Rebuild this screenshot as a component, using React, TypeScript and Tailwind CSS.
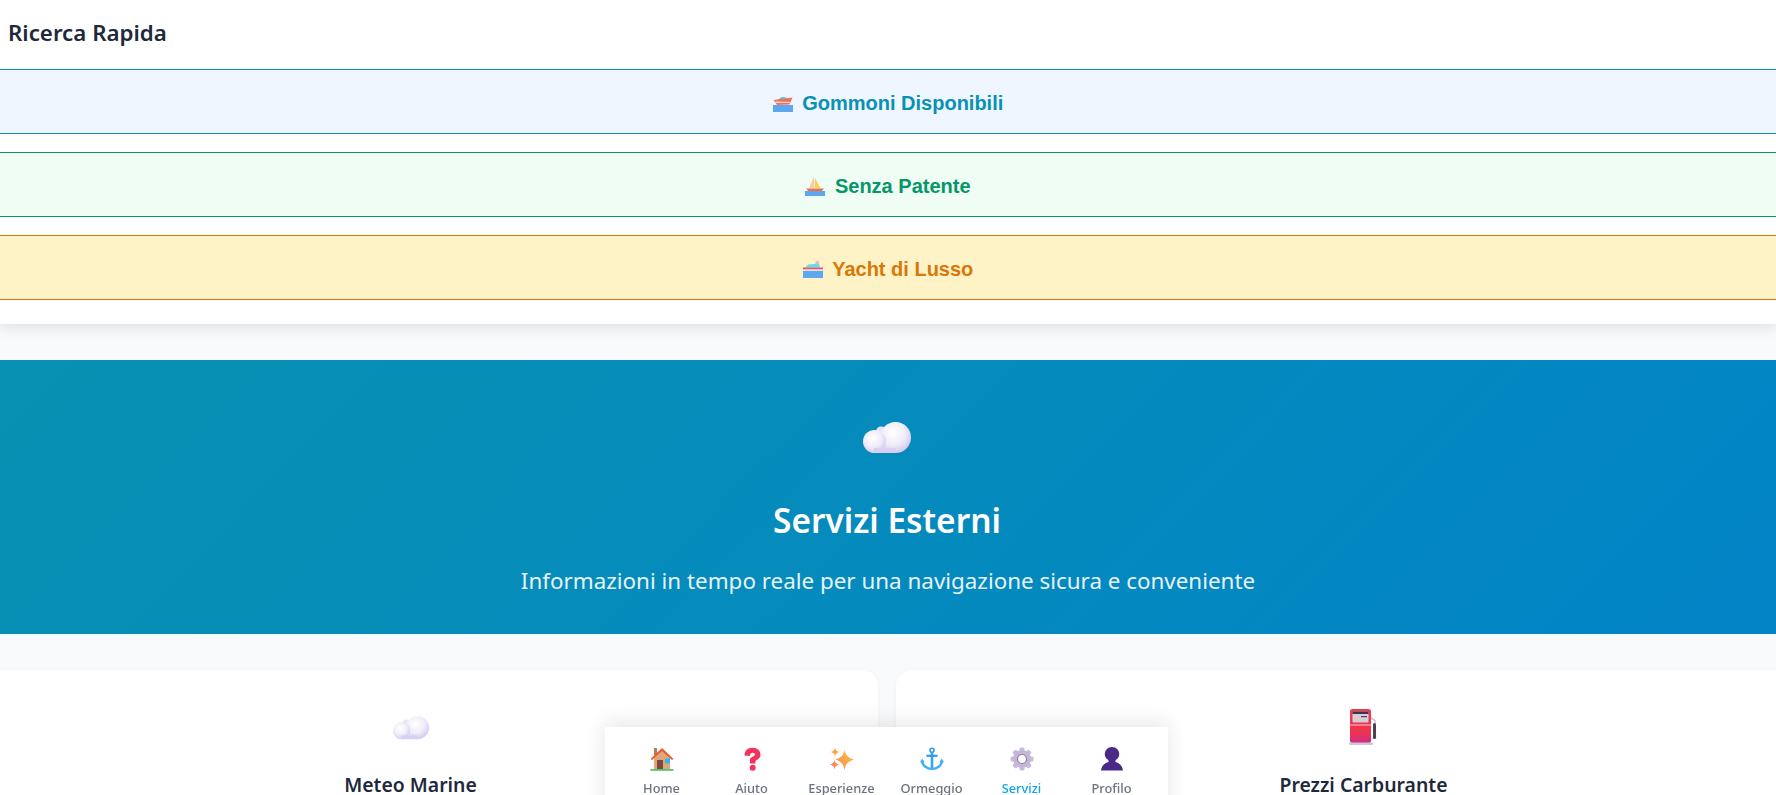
import React from 'react';

const sans = "font-['Noto_Sans',sans-serif]";

function Speedboat() {
  return (
    <svg viewBox="0 0 20 18" className="h-[18px] w-5">
      <path d="M5 5.5 L9 3 L13 3.5 L15 6.5 L6 6.5 Z" fill="#4fc3dc" />
      <path d="M0.5 6 L19.5 3.5 L16.5 10.5 L4 11 Z" fill="#f0705a" />
      <path d="M1.5 7.5 L17.5 8 L17 9 L3 9 Z" fill="#fbd5c8" />
      <rect x="0" y="11" width="20" height="7" fill="#5ba8f0" />
    </svg>
  );
}

function Sailboat() {
  return (
    <svg viewBox="0 0 20 20" className="h-5 w-5">
      <path d="M9 0.5 L9.5 12 L4 12 Z" fill="#fbc9a8" />
      <path d="M10 2 L15.5 12 L10 12 Z" fill="#fcd34d" />
      <path d="M1 12.5 L19 12.5 L16.5 15.5 L3.5 15.5 Z" fill="#ef6c4d" />
      <rect x="0" y="15" width="20" height="5" fill="#5ba8f0" />
    </svg>
  );
}

function Ship() {
  return (
    <svg viewBox="0 0 20 18" className="h-[18px] w-5">
      <path d="M13 1 L16 1 L16 5 L12 5 Z" fill="#f8b4c0" />
      <path d="M5 4.5 L16 3.5 L17 7.5 L2.5 7.5 Z" fill="#5ee0ea" />
      <rect x="0" y="7.5" width="20" height="2" fill="#f0506a" />
      <rect x="0" y="9.5" width="20" height="2" fill="#e4dfe8" />
      <rect x="0" y="11" width="20" height="7" fill="#5ba8f0" />
    </svg>
  );
}

function Cloud({ id, className }: { id: string; className: string }) {
  return (
    <svg viewBox="0 0 48 32" className={className}>
      <defs>
        <radialGradient id={id} cx="0.42" cy="0.35" r="0.7">
          <stop offset="0" stopColor="#ffffff" />
          <stop offset="0.55" stopColor="#f0edf8" />
          <stop offset="1" stopColor="#cfc4ef" />
        </radialGradient>
      </defs>
      <circle cx="18" cy="9.5" r="5" fill="#e9e6f3" />
      <circle cx="32.5" cy="15.5" r="15.5" fill={`url(#${id})`} />
      <circle cx="11.5" cy="19.5" r="11.5" fill={`url(#${id})`} />
      <rect x="11" y="26" width="22" height="5" fill="#d8cff2" />
    </svg>
  );
}

function FuelPump() {
  return (
    <svg viewBox="0 0 28 36" className="-ml-[2px] h-9 w-7">
      <defs>
        <linearGradient id="fuelBody" x1="0" y1="0" x2="0" y2="1">
          <stop offset="0" stopColor="#f23a4b" />
          <stop offset="0.7" stopColor="#ee3350" />
          <stop offset="1" stopColor="#c92f86" />
        </linearGradient>
      </defs>
      <path d="M22 9 L26 11.5 L26.5 29 L23.5 29" fill="none" stroke="#cfc6d4" strokeWidth="1.5" />
      <rect x="24" y="14" width="3" height="16" rx="1.5" fill="#4a4250" />
      <rect x="1" y="0" width="21" height="34" rx="2.5" fill="url(#fuelBody)" />
      <rect x="3.5" y="2.5" width="16" height="11" rx="1" fill="#d5ccd8" />
      <rect x="3.5" y="2.5" width="16" height="2.5" fill="#3d3550" />
      <rect x="12" y="7" width="6" height="1.2" fill="#4b3a70" />
      <rect x="1" y="15.5" width="21" height="1" fill="#f9c6cc" />
      <rect x="0" y="33.5" width="24" height="2.5" rx="1" fill="#d4c2d8" />
    </svg>
  );
}

function House() {
  return (
    <svg viewBox="0 0 24 24" className="h-6 w-6">
      <rect x="4" y="1" width="3" height="7" fill="#b57f52" />
      <path d="M4 10 L12 3 L20 10 L20 22 L4 22 Z" fill="#e0a878" />
      <path d="M0.5 12 L12 1 L23.5 12 L22 13 L12 4 L2 13 Z" fill="#ea5a32" />
      <rect x="7" y="13" width="6" height="9" fill="#7b4a3c" />
      <rect x="15" y="11.5" width="5" height="5" fill="#3fb0ee" />
      <rect x="0.5" y="22" width="23" height="1.8" fill="#55c26c" />
    </svg>
  );
}

function Question() {
  return (
    <svg viewBox="0 0 24 24" className="h-6 w-6">
      <path
        d="M4.5 8.5 C4.5 3.5 8 0.8 12.5 0.8 C17.5 0.8 20.5 4 20.5 7.8 C20.5 11.5 17 12.8 15.5 14 L15.5 16.5 L10 16.5 L10 12.5 C10 10 15 9.5 15 7.8 C15 6.5 14 5.8 12.5 5.8 C11 5.8 10 7 10 9 Z"
        fill="#f4325c"
      />
      <circle cx="12.7" cy="20.7" r="3" fill="#f4325c" />
    </svg>
  );
}

function Sparkles() {
  return (
    <svg viewBox="0 0 24 24" className="h-6 w-6">
      <defs>
        <linearGradient id="spark" x1="0" y1="1" x2="1" y2="0">
          <stop offset="0" stopColor="#f98a5e" />
          <stop offset="1" stopColor="#fdc23c" />
        </linearGradient>
      </defs>
      <path d="M14.5 3 C15.5 8 18 10.5 24 12.5 C18 14.5 15.5 17 14.5 23 C13.5 17 11 14.5 5.5 12.5 C11 10.5 13.5 8 14.5 3 Z" fill="url(#spark)" />
      <path d="M5 0.5 C5.5 3 6.5 4.2 9 5 C6.5 5.8 5.5 7 5 9.5 C4.5 7 3.5 5.8 1 5 C3.5 4.2 4.5 3 5 0.5 Z" fill="#fba43c" />
      <path d="M4.5 13 C5 15.5 6 16.5 9 17.5 C6 18.5 5 19.5 4.5 22.5 C4 19.5 3 18.5 0 17.5 C3 16.5 4 15.5 4.5 13 Z" fill="#f98a5e" />
    </svg>
  );
}

function Anchor() {
  return (
    <svg viewBox="0 0 24 24" className="h-6 w-6" fill="none">
      <circle cx="12" cy="3.2" r="2" stroke="#2f9bee" strokeWidth="1.6" />
      <path d="M12 5 L12 21" stroke="#38a4f0" strokeWidth="2.6" />
      <path d="M6.5 8.8 L17.5 8.8" stroke="#2f9bee" strokeWidth="2.2" />
      <path d="M2 13.5 C2.5 19 7 22 12 22 C17 22 21.5 19 22 13.5" stroke="#45b0f5" strokeWidth="2.6" />
      <path d="M0 15.5 L2.2 11.5 L4.5 15 Z M24 15.5 L21.8 11.5 L19.5 15 Z" fill="#45b0f5" />
    </svg>
  );
}

function Gear() {
  const teeth = [0, 45, 90, 135, 180, 225, 270, 315];
  return (
    <svg viewBox="0 0 24 24" className="h-6 w-6">
      {teeth.map((deg) => (
        <rect key={deg} x="9.5" y="0.5" width="5" height="6" rx="1.5" fill="#c8bbdc" transform={`rotate(${deg} 12 12)`} />
      ))}
      <circle cx="12" cy="12" r="6.5" fill="none" stroke="#c3b6d8" strokeWidth="5" />
      <circle cx="12" cy="12" r="4" fill="#fff" />
      <circle cx="12" cy="12" r="4.5" fill="none" stroke="#8f7fad" strokeWidth="1.2" />
    </svg>
  );
}

function Person() {
  return (
    <svg viewBox="0 0 24 24" className="h-6 w-6">
      <ellipse cx="12" cy="7" rx="7.3" ry="7" fill="#4a2a86" />
      <path d="M8.5 11 L15.5 11 L15.5 15 C19.5 16 22.5 19 23 23.5 L1 23.5 C1.5 19 4.5 16 8.5 15 Z" fill="#4a2a86" />
    </svg>
  );
}

const quickLinks = [
  { label: 'Gommoni Disponibili', icon: <Speedboat />, row: 'bg-[#eff6ff] border-[#0891b2] text-[#0891b2]' },
  { label: 'Senza Patente', icon: <Sailboat />, row: 'bg-[#f0fdf4] border-[#059669] text-[#059669]' },
  { label: 'Yacht di Lusso', icon: <Ship />, row: 'bg-[#fef3c7] border-[#d97706] text-[#d97706]' },
];

const navItems = [
  { label: 'Home', icon: <House /> },
  { label: 'Aiuto', icon: <Question /> },
  { label: 'Esperienze', icon: <Sparkles /> },
  { label: 'Ormeggio', icon: <Anchor /> },
  { label: 'Servizi', icon: <Gear />, active: true },
  { label: 'Profilo', icon: <Person /> },
];

export default function App() {
  return (
    <div className={`h-screen overflow-hidden bg-[#f8fafc] ${sans}`}>
      {/* Ricerca rapida */}
      <section className="bg-white pb-6 shadow-[0_4px_12px_rgba(0,0,0,0.1)]">
        <h2 className="flex h-[69px] items-start pl-2 pt-[17px] text-[22.3px] leading-[32px] font-semibold text-[#1e293b]">
          Ricerca Rapida
        </h2>
        <div className="flex flex-col gap-[18px]">
          {quickLinks.map((link) => (
            <button
              key={link.label}
              className={`flex h-[65px] items-center justify-center gap-[9.5px] border-y pt-[2px] font-['Liberation_Sans',sans-serif] text-[20px] font-bold ${link.row}`}
            >
              {link.icon}
              <span>{link.label}</span>
            </button>
          ))}
        </div>
      </section>

      {/* Hero */}
      <section className="mt-9 flex h-[274px] flex-col items-center bg-[linear-gradient(135deg,#0891b2,#0284c7)] pt-[62px] text-white">
        <Cloud id="heroCloud" className="-ml-[2px] h-8 w-12" />
        <h1 className="mt-[42px] -ml-[2px] text-[33.4px] leading-[48px] font-semibold">Servizi Esterni</h1>
        <p className="mt-[21px] text-[22.4px] leading-[32px] opacity-90">
          Informazioni in tempo reale per una navigazione sicura e conveniente
        </p>
      </section>

      {/* Servizi */}
      <section className="-mr-[55px] -ml-[57px] mt-9 grid grid-cols-2 gap-[18px]">
        <div className="flex h-[300px] flex-col items-center rounded-2xl bg-white pt-[46px] shadow-[0_1px_4px_rgba(0,0,0,0.04)]">
          <Cloud id="cardCloud" className="h-6 w-9" />
          <h3 className="mt-[30px] text-[19.4px] leading-[30px] font-semibold text-[#1e293b]">Meteo Marine</h3>
        </div>
        <div className="flex h-[300px] flex-col items-center rounded-2xl bg-white pt-[39px] shadow-[0_1px_4px_rgba(0,0,0,0.04)]">
          <FuelPump />
          <h3 className="mt-[25px] text-[19.4px] leading-[30px] font-semibold text-[#1e293b]">Prezzi Carburante</h3>
        </div>
      </section>

      {/* Barra di navigazione */}
      <nav className="fixed top-[727px] left-[605px] flex h-[90px] w-[563px] justify-center bg-white pt-[20px] shadow-[0_-4px_20px_rgba(0,0,0,0.1)]">
        {navItems.map((item) => (
          <div key={item.label} className="flex w-[90px] flex-col items-center">
            {item.icon}
            <span className={`mt-[8px] text-[12.8px] leading-[18px] font-medium ${item.active ? 'text-[#0ea5e9]' : 'text-[#6b7280]'}`}>
              {item.label}
            </span>
          </div>
        ))}
      </nav>
    </div>
  );
}
